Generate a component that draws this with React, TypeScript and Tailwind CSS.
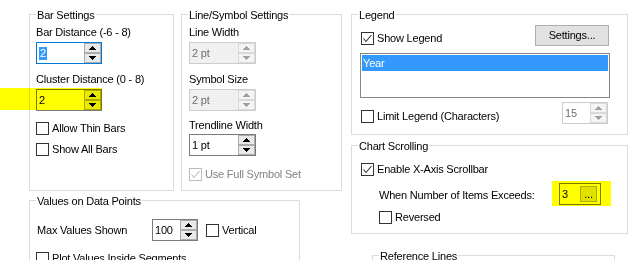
import React from "react";

function Arrow({ up, color }: { up?: boolean; color: string }) {
  const rows = up
    ? ["w-px", "w-[3px]", "w-[5px]", "w-[7px]"]
    : ["w-[7px]", "w-[5px]", "w-[3px]", "w-px"];
  return (
    <div className="flex flex-col items-center">
      {rows.map((r, i) => (
        <div key={i} className={`h-px ${r} ${color}`} />
      ))}
    </div>
  );
}

type Variant = "normal" | "focus" | "disabled" | "disabledWhite";

function SpinBox({
  className,
  children,
  variant = "normal",
}: {
  className: string;
  children: React.ReactNode;
  variant?: Variant;
}) {
  const dis = variant === "disabled" || variant === "disabledWhite";
  const border =
    variant === "focus"
      ? "border-[#0078d7]"
      : dis
      ? "border-[#cccccc]"
      : "border-[#7a7a7a]";
  const bg = variant === "disabled" ? "bg-[#f0f0f0]" : "bg-white";
  const text = dis ? "text-[#6d6d6d]" : "text-black";
  const btn = dis
    ? "border-[#d9d9d9] bg-[#f4f4f4]"
    : "border-[#acacac] bg-[#e9e9e9]";
  const arrow = dis ? "bg-[#a0a0a0]" : "bg-black";
  return (
    <div className={`flex h-[22px] border ${border} ${bg} ${className}`}>
      <div className={`flex flex-1 items-center pl-[2px] leading-[13px] ${text}`}>
        {children}
      </div>
      <div className="flex w-[17px] flex-col">
        <div className={`flex flex-1 items-center justify-center border ${btn}`}>
          <Arrow up color={arrow} />
        </div>
        <div className={`flex flex-1 items-center justify-center border ${btn}`}>
          <Arrow color={arrow} />
        </div>
      </div>
    </div>
  );
}

function CheckBox({
  checked,
  disabled,
  label,
  className = "",
}: {
  checked?: boolean;
  disabled?: boolean;
  label: string;
  className?: string;
}) {
  const c = disabled ? "#bcbcbc" : "#333333";
  return (
    <div className={`flex h-[13px] items-center gap-[3px] ${className}`}>
      <div
        className={`h-[13px] w-[13px] shrink-0 border bg-white ${
          disabled ? "border-[#bcbcbc]" : "border-[#333333]"
        }`}
      >
        {checked && (
          <svg width="11" height="11" viewBox="0 0 11 11">
            <polyline
              points="1.5,5.5 4,8.5 9.5,2"
              fill="none"
              stroke={c}
              strokeWidth="1.1"
            />
          </svg>
        )}
      </div>
      <span
        className={`whitespace-nowrap leading-[13px] ${
          disabled ? "text-[#838383]" : "text-black"
        }`}
      >
        {label}
      </span>
    </div>
  );
}

function Group({
  title,
  className,
  children,
}: {
  title: string;
  className: string;
  children?: React.ReactNode;
}) {
  return (
    <div className={`relative shrink-0 border border-[#dcdcdc] ${className}`}>
      <span className="absolute -top-[6px] left-[6px] whitespace-nowrap bg-white px-px leading-[13px]">
        {title}
      </span>
      {children}
    </div>
  );
}

function Label({ children, className }: { children: React.ReactNode; className: string }) {
  return <div className={`h-[13px] whitespace-nowrap leading-[13px] ${className}`}>{children}</div>;
}

export default function App() {
  return (
    <div
      className="relative h-[260px] w-[639px] overflow-hidden bg-white text-[11px] tracking-[-0.2px] text-black"
      style={{ fontFamily: '"Liberation Sans", Arial, sans-serif' }}
    >
      <div className="flex pl-[29px] pt-[14px]">
        {/* left area */}
        <div className="flex w-[313px] shrink-0 flex-col">
          <div className="flex gap-[7px]">
            <Group title="Bar Settings" className="h-[177px] w-[145px]">
              <div className="flex flex-col">
                <Label className="ml-[6px] mt-[11px]">Bar Distance (-6 - 8)</Label>
                <SpinBox className="ml-[6px] mt-[3px] w-[66px]" variant="focus">
                  <span className="bg-[#3399ff] px-px text-white">2</span>
                </SpinBox>
                <Label className="ml-[6px] mt-[9px]">Cluster Distance (0 - 8)</Label>
                <SpinBox className="ml-[6px] mt-[3px] w-[66px]">2</SpinBox>
                <CheckBox className="ml-[6px] mt-[11px]" label="Allow Thin Bars" />
                <CheckBox className="ml-[6px] mt-[8px]" label="Show All Bars" />
              </div>
            </Group>
            <Group title="Line/Symbol Settings" className="h-[177px] w-[161px]">
              <div className="flex flex-col">
                <Label className="ml-[7px] mt-[11px]">Line Width</Label>
                <SpinBox className="ml-[7px] mt-[3px] w-[67px]" variant="disabled">
                  2 pt
                </SpinBox>
                <Label className="ml-[7px] mt-[9px]">Symbol Size</Label>
                <SpinBox className="ml-[7px] mt-[3px] w-[67px]" variant="disabled">
                  2 pt
                </SpinBox>
                <Label className="ml-[7px] mt-[8px]">Trendline Width</Label>
                <SpinBox className="ml-[7px] mt-[2px] w-[67px]">1 pt</SpinBox>
                <CheckBox
                  className="ml-[7px] mt-[12px]"
                  checked
                  disabled
                  label="Use Full Symbol Set"
                />
              </div>
            </Group>
          </div>
          <Group title="Values on Data Points" className="mt-[9px] h-[80px] w-[271px]">
            <div className="flex flex-col">
              <div className="mt-[18px] flex items-center">
                <Label className="ml-[7px] w-[115px]">Max Values Shown</Label>
                <SpinBox className="w-[46px]">100</SpinBox>
                <CheckBox className="ml-[8px]" label="Vertical" />
              </div>
              <CheckBox className="ml-[6px] mt-[11px]" label="Plot Values Inside Segments" />
            </div>
          </Group>
        </div>

        {/* right area */}
        <div className="ml-[9px] flex shrink-0 flex-col">
          <Group title="Legend" className="h-[121px] w-[277px]">
            <div className="flex flex-col">
              <div className="mt-[10px] flex items-start justify-between pl-[9px] pr-[18px]">
                <CheckBox className="mt-[7px]" checked label="Show Legend" />
                <button className="flex h-[21px] w-[74px] items-center justify-center border border-[#adadad] bg-[#e1e1e1] leading-[13px]">
                  Settings...
                </button>
              </div>
              <div className="ml-[8px] mt-[7px] h-[45px] w-[250px] border border-[#828790] bg-white p-px">
                <div className="h-[16px] bg-[#3399ff] pl-px leading-[16px] text-white">Year</div>
              </div>
              <div className="mt-[4px] flex items-start justify-between pl-[9px] pr-[19px]">
                <CheckBox className="mt-[8px]" label="Limit Legend (Characters)" />
                <SpinBox className="w-[46px]" variant="disabledWhite">
                  15
                </SpinBox>
              </div>
            </div>
          </Group>
          <Group title="Chart Scrolling" className="mt-[10px] h-[89px] w-[277px]">
            <div className="flex flex-col">
              <CheckBox className="ml-[9px] mt-[17px]" checked label="Enable X-Axis Scrollbar" />
              <div className="mt-[7px] flex items-start">
                <Label className="ml-[27px] mt-[6px] flex-1">When Number of Items Exceeds:</Label>
                <div className="mr-[26px] flex h-[22px] w-[42px] items-center border border-[#7a7a7a] bg-white">
                  <span className="pl-[2px] leading-[13px]">3</span>
                  <div className="ml-auto mr-[3px] flex h-[16px] w-[17px] items-center justify-center border border-[#adadad] bg-[#e1e1e1] leading-[13px]">
                    ...
                  </div>
                </div>
              </div>
              <CheckBox className="ml-[27px] mt-[6px]" label="Reversed" />
            </div>
          </Group>
          <Group title="Reference Lines" className="ml-[21px] mt-[21px] h-[40px] w-[243px]" />
        </div>
      </div>

      {/* highlighter marks */}
      <div className="pointer-events-none absolute left-0 top-[88px] z-10 h-[22px] w-[102px] bg-[#ffff00] mix-blend-multiply" />
      <div className="pointer-events-none absolute left-[552px] top-[181px] z-10 h-[25px] w-[59px] bg-[#ffff00] mix-blend-multiply" />
    </div>
  );
}
